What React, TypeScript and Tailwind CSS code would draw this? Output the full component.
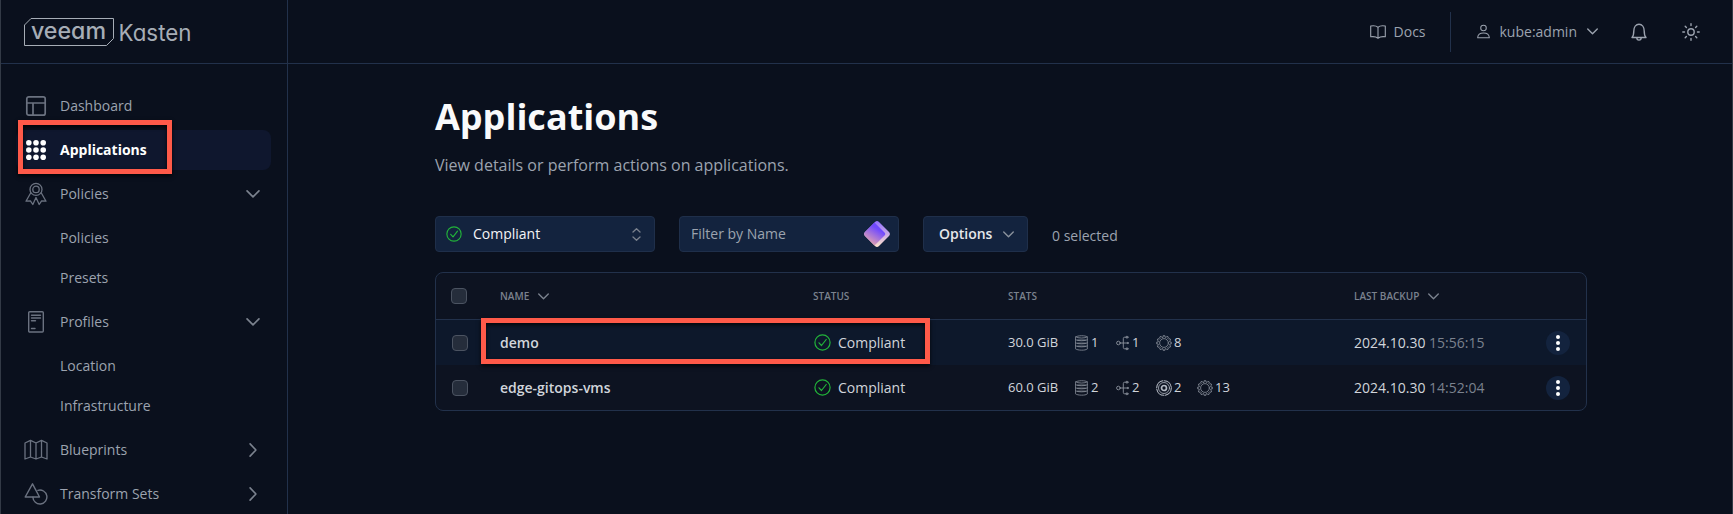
import type { ReactNode } from "react";

type IconProps = { className?: string; children?: ReactNode; box?: string; sw?: number };

function Svg({ className, children, box = "0 0 24 24", sw = 1.5 }: IconProps) {
  return (
    <svg
      className={className}
      viewBox={box}
      fill="none"
      stroke="currentColor"
      strokeWidth={sw}
      strokeLinecap="round"
      strokeLinejoin="round"
    >
      {children}
    </svg>
  );
}

function Logo() {
  return (
    <svg className="block h-[30px] w-[170px]" viewBox="0 0 170 30" fontFamily="Inter, sans-serif" fill="#a6adb6">
      <path d="M7 .5H89.5V20.5L82.500 27.500H.5V7Z" fill="none" stroke="#a6adb6" strokeWidth="1" />
      <text x="7" y="20.500" fontSize="23" fontWeight="500" textLength="75" lengthAdjust="spacingAndGlyphs" className="[font-feature-settings:'cv11']">
        veeam
      </text>
      <text x="94.500" y="22.700" fontSize="23" fontWeight="400" textLength="73" lengthAdjust="spacingAndGlyphs" className="[font-feature-settings:'cv11']">
        Kasten
      </text>
    </svg>
  );
}

const DashboardIcon = () => (
  <Svg className="size-6" sw={1.7}>
    <rect x="2.800" y="2.800" width="18.400" height="18.400" rx="2" />
    <path d="M3 9h18M9 9v12" />
  </Svg>
);

const AppsIcon = () => (
  <svg className="size-6" viewBox="0 0 24 24" fill="currentColor">
    {[4.8, 12, 19.2].map((y) => [4.8, 12, 19.2].map((x) => <circle key={`${x}-${y}`} cx={x} cy={y} r="2.800" />))}
  </svg>
);

const PoliciesIcon = () => (
  <Svg className="size-6" sw={1.3}>
    <circle cx="12" cy="7.400" r="6" />
    <circle cx="12" cy="7.400" r="3.200" />
    <path d="M6.800 10.800L2 19.200l4.400-.4 2.400 3.700L12 15.500l3.200 7 2.400-3.700 4.400.4L17.200 10.800" />
  </Svg>
);

const ProfilesIcon = () => (
  <Svg className="size-6" sw={1.4}>
    <rect x="4.700" y="1.800" width="14.600" height="20.200" rx="1" />
    <path d="M7.500 5.200h9M7.500 8h9M7.500 10.800h4M7.500 18.500h3.500" />
  </Svg>
);

const BlueprintsIcon = () => (
  <Svg className="size-6" sw={1.3}>
    <path d="M1 5l5.500-2.700L12 5l5.500-2.700L23 5v16l-5.500-2L12 21l-5.500-2L1 21ZM6.500 2.300V19M12 5v16M17.500 2.300V19" />
  </Svg>
);

const TransformIcon = () => (
  <Svg className="size-6" sw={1.4}>
    <path d="M8.500 1.800L15.500 15H1.200Z" />
    <path d="M13.900 8.300a7 7 0 1 1-5 6.900" />
  </Svg>
);

const ChevronDown = ({ className = "h-[7px] w-3" }: { className?: string }) => (
  <Svg className={className} box="0 0 12 7">
    <path d="M.8.8L6 6 11.200.8" />
  </Svg>
);

const Check = () => (
  <Svg className="size-[17px] shrink-0 text-[#22b43a]" box="0 0 17 17" sw={1.2}>
    <circle cx="8.500" cy="8.500" r="7.600" />
    <path d="M5 8.800l2.500 2.700 4.700-6" />
  </Svg>
);

const VolumeIcon = () => (
  <Svg className="mr-px h-4 w-[13px]" box="0 0 13 16" sw={0.8}>
    <path d="M.7 1.900C2.500.3 10.500.3 12.300 1.900V14C10.500 15.600 2.500 15.600.7 14ZM.7 1.900C2.500 3.500 10.500 3.500 12.300 1.900M.7 4.900C2.500 6.100 10.500 6.100 12.300 4.900M.7 8C2.500 9.200 10.500 9.200 12.300 8M.7 11C2.500 12.200 10.500 12.200 12.300 11M2.500 8.100h8M2.500 11.100h8M2.500 5h8" />
  </Svg>
);

const NetworkIcon = () => (
  <Svg className="mr-px h-4 w-[13px]" box="0 0 13 16" sw={0.9}>
    <circle cx="2.400" cy="8" r="1.800" />
    <path d="M4.200 8H12M10.500 2.200H8.700Q7.300 2.200 7.300 3.600V12.400Q7.300 13.800 8.700 13.800H10.500" />
    <circle cx="11" cy="2.200" r="1" />
    <circle cx="11.700" cy="8" r=".6" />
    <circle cx="11" cy="13.800" r="1" />
  </Svg>
);

const teeth = 12;
const gearOutline = Array.from({ length: teeth }, (_, i) =>
  [
    [-0.3, 6],
    [-0.22, 7.4],
    [0.22, 7.4],
    [0.3, 6],
  ].map(([offset, radius]) => {
    const angle = ((i + offset) / teeth) * Math.PI * 2;
    return `${(8 + radius * Math.sin(angle)).toFixed(2)} ${(8 - radius * Math.cos(angle)).toFixed(2)}`;
  }),
)
  .flat()
  .join("L");

const GearIcon = () => (
  <Svg className="size-4" box="0 0 16 16" sw={0.8}>
    <path d={`M${gearOutline}Z`} />
    <circle cx="8" cy="8" r="4.400" />
  </Svg>
);

const TargetIcon = () => (
  <Svg className="size-4 text-[#b4bac4]" box="0 0 16 16" sw={1.1}>
    <circle cx="8" cy="8" r="7.300" strokeDasharray="10 1.500" />
    <circle cx="8" cy="8" r="5.500" strokeWidth=".8" />
    <circle cx="8" cy="8" r="2.500" strokeWidth="1.700" />
  </Svg>
);

type NavProps = { label: string; icon?: ReactNode; arrow?: "down" | "right"; active?: boolean };

function NavItem({ label, icon, arrow, active }: NavProps) {
  return (
    <div
      className={
        active
          ? "relative flex h-10 items-center rounded-lg bg-[#0f172e] pr-3 pl-2 font-bold text-white"
          : "relative flex h-10 items-center pr-[11px] pl-2 text-[#9ca3af]"
      }
    >
      <span className={active ? "w-9 text-white" : "w-9 text-[#6b7280]"}>{icon}</span>
      <span className="flex-1">{label}</span>
      {arrow === "down" && <ChevronDown className="h-2 w-[14px] text-[#7b828e]" />}
      {arrow === "right" && (
        <Svg className="mr-[3px] h-[14px] w-2 text-[#7b828e]" box="0 0 7 13" sw={1.5}>
          <path d="M.8.8L6.200 6.500.8 12.200" />
        </Svg>
      )}
      {active && (
        <span className="absolute top-[-10px] left-[2px] h-[54px] w-[154px] border-[5px] border-[#ff5a49] shadow-[0_2px_4px_rgba(0,0,0,0.8),inset_0_2px_4px_rgba(0,0,0,0.8)]" />
      )}
    </div>
  );
}

const Checkbox = () => <span className="block size-4 rounded border border-[#4b5361] bg-[#252d3b]" />;

const Stat = ({ icon, value, w }: { icon: ReactNode; value: number; w: string }) => (
  <span className={`flex items-center ${w}`}>
    <span className="text-[#8b929d]">{icon}</span>
    <span className="flex-1 pl-[2px]">{value}</span>
  </span>
);

type RowProps = { name: string; size: string; time: string; highlighted?: boolean; children: ReactNode };

function Row({ name, size, time, highlighted, children }: RowProps) {
  return (
    <div
      className={
        highlighted
          ? "relative flex h-[45px] items-center bg-[#0d182b] pl-4 text-sm text-[#d1d5db]"
          : "relative flex h-[45px] items-center pl-4 text-sm text-[#d1d5db]"
      }
    >
      <span className="w-12">
        <Checkbox />
      </span>
      <span className="w-[314px] font-semibold">{name}</span>
      <span className="flex w-[194px] items-center gap-[7px]">
        <Check />
        Compliant
      </span>
      <span className="flex w-[346px] items-center text-[13px]">
        <span className="w-[67px]">{size}</span>
        {children}
      </span>
      <span className="w-[192px]">
        2024.10.30 <span className="text-[#7b828e]">{time}</span>
      </span>
      <span className="flex size-6 items-center justify-center rounded-full bg-[#13233e]">
        <svg className="h-[18px] w-1" viewBox="0 0 4 18" fill="#fff">
          <circle cx="2" cy="3" r="2" />
          <circle cx="2" cy="9" r="2" />
          <circle cx="2" cy="15" r="2" />
        </svg>
      </span>
      {highlighted && (
        <span className="absolute top-[-2px] left-[45px] h-[46px] w-[449px] border-[5px] border-[#ff5a49] shadow-[0_2px_4px_rgba(0,0,0,0.8),inset_0_2px_4px_rgba(0,0,0,0.8)]" />
      )}
    </div>
  );
}

export default function App() {
  return (
    <div className="flex h-[514px] w-[1733px] overflow-hidden border-x border-[#333a46] bg-[#0a101d] font-['Open_Sans',sans-serif] text-sm">
      <aside className="w-[287px] shrink-0 border-r border-[#22314b]">
        <div className="h-16 border-b border-[#22314b] pt-[18px] pl-[23px]">
          <Logo />
        </div>
        <nav className="flex flex-col gap-1 pt-[22px] pr-4 pl-[15px]">
          <NavItem label="Dashboard" icon={<DashboardIcon />} />
          <NavItem label="Applications" icon={<AppsIcon />} active />
          <NavItem label="Policies" icon={<PoliciesIcon />} arrow="down" />
          <div>
            <NavItem label="Policies" />
            <NavItem label="Presets" />
          </div>
          <NavItem label="Profiles" icon={<ProfilesIcon />} arrow="down" />
          <div>
            <NavItem label="Location" />
            <NavItem label="Infrastructure" />
          </div>
          <NavItem label="Blueprints" icon={<BlueprintsIcon />} arrow="right" />
          <NavItem label="Transform Sets" icon={<TransformIcon />} arrow="right" />
        </nav>
      </aside>
      <div className="flex-1">
        <header className="flex h-16 items-center justify-end border-b border-[#22314b] pr-8 text-[#9ca3af]">
          <Svg className="mr-2 h-[14px] w-4" box="0 0 16 14" sw={1.1}>
            <path d="M8 2.300C6.500.8 3.500.5.7 1v10.800c2.800-.4 5.500 0 7.300 1.400 1.800-1.400 4.500-1.800 7.300-1.400V1C12.500.5 9.500.8 8 2.300ZM8 2.300v10.500" />
          </Svg>
          <span>Docs</span>
          <span className="mx-6 h-10 w-px bg-[#22314b]" />
          <Svg className="mr-[10px] ml-[2px] h-[15px] w-[13px]" box="0 0 14 15" sw={1.1}>
            <circle cx="7" cy="3.800" r="3" />
            <path d="M.7 14.200C.9 11 3.500 9.200 7 9.200s6.100 1.800 6.300 5Z" />
          </Svg>
          <span>kube:admin</span>
          <ChevronDown className="ml-[10px] h-[7px] w-[11px]" />
          <Svg className="ml-[33px] h-[18px] w-4" box="0 0 16 18" sw={1.4}>
            <path d="M1 14.500c1.500-1.500 1.800-3 1.800-6.500C2.800 4 5 1.200 8 1.200S13.200 4 13.200 8c0 3.500.3 5 1.800 6.500ZM5.800 14.800c0 1.400 1 2.300 2.200 2.300s2.200-.9 2.200-2.300" />
          </Svg>
          <Svg className="ml-[35px] size-[18px]" box="0 0 18 18" sw={1.4}>
            <circle cx="9" cy="9" r="3.200" />
            <path d="M9 .8v1.700M9 15.500v1.700M.8 9h1.700M15.500 9h1.700M3.200 3.200l1.200 1.200M13.600 13.600l1.200 1.200M3.200 14.800l1.200-1.200M13.600 4.400l1.200-1.200" />
          </Svg>
        </header>
        <main className="ml-[147px] w-[1152px] pt-[29px]">
          <h1 className="text-4xl leading-[48px] font-bold text-[#f9fafb]">Applications</h1>
          <p className="mt-3 text-base leading-6 text-[#9ca3af]">View details or perform actions on applications.</p>
          <div className="mt-[39px] flex h-9 items-center gap-6 text-[#9ca3af]">
            <div className="flex h-9 w-[220px] items-center rounded border border-[#1f2f4a] bg-[#13233e] pr-[13px] pl-[10px]">
              <Svg className="size-4 text-[#22b43a]" box="0 0 17 17" sw={1.2}>
                <circle cx="8.500" cy="8.500" r="7.600" />
                <path d="M5 8.800l2.500 2.700 4.700-6" />
              </Svg>
              <span className="ml-[11px] flex-1 text-[#f3f4f6]">Compliant</span>
              <Svg className="h-[13px] w-[9px] text-[#7b828e]" box="0 0 9 13" sw={1.3}>
                <path d="M1 4L4.500.8 8 4M1 9l3.500 3.200L8 9" />
              </Svg>
            </div>
            <div className="flex h-9 w-[220px] items-center justify-between rounded border border-[#1f2f4a] bg-[#13233e] pr-2 pl-[11px]">
              <span>Filter by Name</span>
              <svg className="size-[26px]" viewBox="0 0 26 26">
                <defs>
                  <linearGradient id="front" x1=".75" y1="0" x2=".15" y2="1">
                    <stop offset=".25" stopColor="#7049ff" />
                    <stop offset="1" stopColor="#f6b3a2" />
                  </linearGradient>
                  <linearGradient id="side" x1="0" y1="0" x2="0" y2="1">
                    <stop offset="0" stopColor="#9270ff" />
                    <stop offset="1" stopColor="#ffe3cc" />
                  </linearGradient>
                </defs>
                <path d="M11 1Q13-.8 15 1L25 11Q26.800 13 25 15L15 25Q13 26.800 11 25L1 15Q-.8 13 1 11Z" fill="url(#side)" />
                <path d="M10.500 1.500L20.500 11.500Q22 13 20.500 14.500L10.500 24.500L1 15Q-.8 13 1 11Z" fill="url(#front)" />
              </svg>
            </div>
            <div className="flex h-9 w-[105px] items-center rounded border border-[#1f2f4a] bg-[#13233e] pl-[15px] font-semibold text-[#e5e7eb]">
              <span className="w-[64px]">Options</span>
              <ChevronDown className="h-[7px] w-[11px] text-[#8b929d]" />
            </div>
            <span className="pt-1">0 selected</span>
          </div>
          <section className="mt-5 h-[139px] rounded-lg border border-[#22314b] bg-[#0d1321]">
            <div className="flex h-[47px] items-center border-b border-[#22314b] pl-[15px] text-[10px] font-semibold text-[#7b828e]">
              <span className="w-[49px]">
                <Checkbox />
              </span>
              <span className="flex w-[313px] items-center gap-[9px]">
                NAME <ChevronDown className="h-[7px] w-[11px]" />
              </span>
              <span className="w-[195px]">STATUS</span>
              <span className="w-[346px]">STATS</span>
              <span className="flex items-center gap-[9px]">
                LAST BACKUP <ChevronDown className="h-[7px] w-[11px]" />
              </span>
            </div>
            <Row name="demo" size="30.0 GiB" time="15:56:15" highlighted>
              <Stat icon={<VolumeIcon />} value={1} w="w-[41px]" />
              <Stat icon={<NetworkIcon />} value={1} w="w-[40px]" />
              <Stat icon={<GearIcon />} value={8} w="w-[41px]" />
            </Row>
            <Row name="edge-gitops-vms" size="60.0 GiB" time="14:52:04">
              <Stat icon={<VolumeIcon />} value={2} w="w-[41px]" />
              <Stat icon={<NetworkIcon />} value={2} w="w-[40px]" />
              <Stat icon={<TargetIcon />} value={2} w="w-[41px]" />
              <Stat icon={<GearIcon />} value={13} w="w-[41px]" />
            </Row>
          </section>
        </main>
      </div>
    </div>
  );
}
